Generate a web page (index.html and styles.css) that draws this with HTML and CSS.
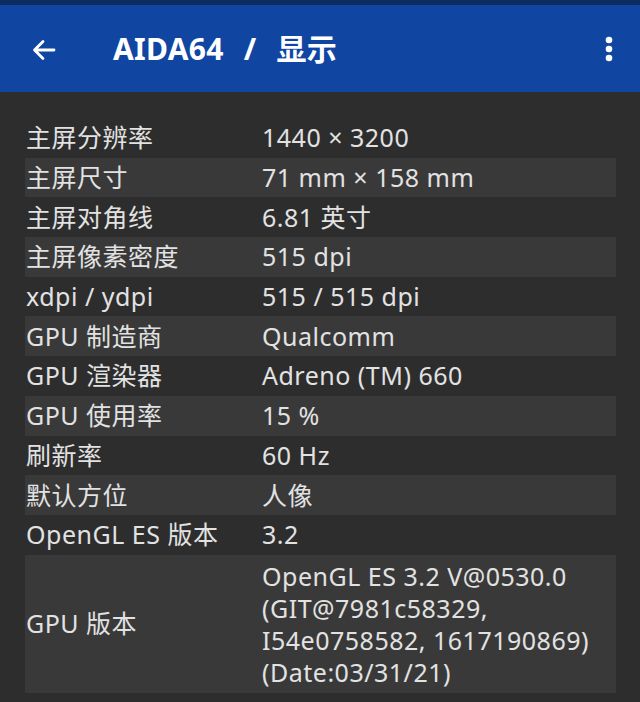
FILE: index.html
```html
<!DOCTYPE html>
<html lang="zh-CN">
<head>
<meta charset="utf-8">
<link rel="stylesheet" href="styles.css">
</head>
<body>
<div class="status"></div>
<header class="appbar">
  <svg class="back" width="26" height="26" viewBox="0 0 26 26"><path d="M23 13H4M12 4.5L3.5 13L12 21.5" fill="none" stroke="#fff" stroke-width="2.8" stroke-linecap="round" stroke-linejoin="round"/></svg>
  <h1 class="title"><span>AIDA64</span><span class="slash">/</span><span>显示</span></h1>
  <svg class="menu" width="8" height="26" viewBox="0 0 8 26"><circle cx="4" cy="4" r="3.3" fill="#fff"/><circle cx="4" cy="13" r="3.3" fill="#fff"/><circle cx="4" cy="22" r="3.3" fill="#fff"/></svg>
</header>
<main class="list">
  <div class="row"><div class="k">主屏分辨率</div><div class="v">1440 × 3200</div></div>
  <div class="row alt"><div class="k">主屏尺寸</div><div class="v">71 mm × 158 mm</div></div>
  <div class="row"><div class="k">主屏对角线</div><div class="v">6.81 英寸</div></div>
  <div class="row alt"><div class="k">主屏像素密度</div><div class="v">515 dpi</div></div>
  <div class="row"><div class="k">xdpi / ydpi</div><div class="v">515 / 515 dpi</div></div>
  <div class="row alt"><div class="k">GPU 制造商</div><div class="v">Qualcomm</div></div>
  <div class="row"><div class="k">GPU 渲染器</div><div class="v">Adreno (TM) 660</div></div>
  <div class="row alt"><div class="k">GPU 使用率</div><div class="v">15 %</div></div>
  <div class="row"><div class="k">刷新率</div><div class="v">60 Hz</div></div>
  <div class="row alt"><div class="k">默认方位</div><div class="v">人像</div></div>
  <div class="row"><div class="k">OpenGL ES 版本</div><div class="v">3.2</div></div>
  <div class="row alt multi"><div class="k">GPU 版本</div><div class="v">OpenGL ES 3.2 V@0530.0<br>(GIT@7981c58329,<br>I54e0758582, 1617190869)<br>(Date:03/31/21)</div></div>
</main>
</body>
</html>
```
FILE: styles.css
```css
html, body {
  margin: 0;
  padding: 0;
  background: #2d2d2d;
  height: 100%;
}
body {
  font-family: "Noto Sans", "Noto Sans CJK SC", sans-serif;
  color: #e2e2e2;
}
.status {
  height: 5px;
  background: #0d2b60;
}
.appbar {
  height: 87px;
  background: #1046a2;
  display: flex;
  align-items: center;
  padding: 0 0 0 31px;
  box-sizing: border-box;
}
.back {
  flex: none;
  margin-top: 2px;
}
.title {
  margin: 0 0 0 56px;
  font-size: 30px;
  font-weight: 700;
  color: #fff;
  flex: 1;
  display: flex;
  align-items: center;
  line-height: 1;
  margin-top: 1px;
  letter-spacing: 0.3px;
}
.slash {
  margin: 0 20px 0 20px;
}
.menu {
  flex: none;
  margin-right: 27px;
  margin-top: 1px;
}
.list {
  padding: 26px 0 0 25px;
  width: 591px;
}
.row {
  display: grid;
  grid-template-columns: 237px 1fr;
  height: 39.7px;
  align-items: center;
  font-size: 25px;
  letter-spacing: 0.5px;
  line-height: 1;
}
.row.alt {
  background: #393939;
}
.k {
  padding-left: 1px;
}
.row.multi {
  height: 138px;
}
.multi .v {
  line-height: 32px;
}
```
